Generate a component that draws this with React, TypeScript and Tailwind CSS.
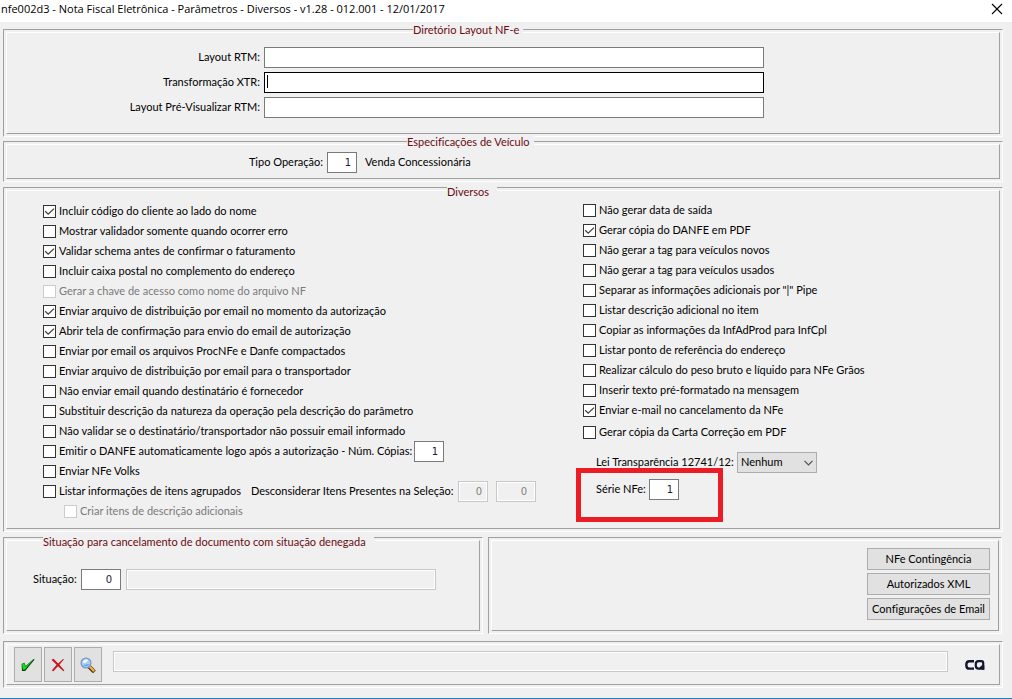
import { useState, type ReactNode } from "react";

const field = "h-[21px] border border-[#7a7a7a] bg-white outline-none";
const digits = "font-['DejaVu_Sans'] text-[10px] text-right text-[#1a1a3a]";
const disabledField =
  "h-[21px] border border-[#c8c8c8] bg-[#f0f0f0] shadow-[inset_0_0_0_1px_#fff] outline-none";

function Panel({
  className = "",
  title,
  titleClass = "",
  children,
}: {
  className?: string;
  title?: string;
  titleClass?: string;
  children: ReactNode;
}) {
  return (
    <fieldset
      className={`relative min-w-0 border border-t-[#a0a0a0] border-l-[#a0a0a0] border-r-white border-b-white p-[2px] ${className}`}
    >
      {title && (
        <legend
          className={`absolute bg-[#f0f0f0] leading-[14px] whitespace-nowrap text-[#6b0a12] ${titleClass}`}
        >
          {title}
        </legend>
      )}
      <div className="h-full border border-t-white border-l-white border-r-[#a0a0a0] border-b-[#a0a0a0]">
        {children}
      </div>
    </fieldset>
  );
}

type Option = { text: string; on?: boolean; off?: boolean };

function Check({ text, on = false, off = false }: Option) {
  const [checked, setChecked] = useState(on);
  return (
    <label
      className={`flex h-[19px] items-center gap-[3px] whitespace-nowrap ${off ? "text-[#7a7a7a]" : ""}`}
    >
      <span className="grid">
        <input
          type="checkbox"
          checked={checked}
          disabled={off}
          onChange={(e) => setChecked(e.target.checked)}
          className="col-start-1 row-start-1 size-[13px] appearance-none border border-[#333] bg-white disabled:border-[#ccc]"
        />
        {checked && (
          <svg viewBox="0 0 13 13" className="pointer-events-none col-start-1 row-start-1 size-[13px]">
            <path d="M2.2 6.3 5.2 9.2 11 3.6" fill="none" stroke="#404040" strokeWidth="1.3" />
          </svg>
        )}
      </span>
      {text}
    </label>
  );
}

const leftOptions: Option[] = [
  { text: "Incluir código do cliente ao lado do nome", on: true },
  { text: "Mostrar validador somente quando ocorrer erro" },
  { text: "Validar schema antes de confirmar o faturamento", on: true },
  { text: "Incluir caixa postal no complemento do endereço" },
  { text: "Gerar a chave de acesso como nome do arquivo NF", off: true },
  { text: "Enviar arquivo de distribuição por email no momento da autorização", on: true },
  { text: "Abrir tela de confirmação para envio do email de autorização", on: true },
  { text: "Enviar por email os arquivos ProcNFe e Danfe compactados" },
  { text: "Enviar arquivo de distribuição por email para o transportador" },
  { text: "Não enviar email quando destinatário é fornecedor" },
  { text: "Substituir descrição da natureza da operação pela descrição do parâmetro" },
  { text: "Não validar se o destinatário/transportador não possuir email informado" },
];

const rightOptions: Option[] = [
  { text: "Não gerar data de saída" },
  { text: "Gerar cópia do DANFE em PDF", on: true },
  { text: "Não gerar a tag para veículos novos" },
  { text: "Não gerar a tag para veículos usados" },
  { text: 'Separar as informações adicionais por "|" Pipe' },
  { text: "Listar descrição adicional no item" },
  { text: "Copiar as informações da InfAdProd para InfCpl" },
  { text: "Listar ponto de referência do endereço" },
  { text: "Realizar cálculo do peso bruto e líquido para NFe Grãos" },
  { text: "Inserir texto pré-formatado na mensagem" },
  { text: "Enviar e-mail no cancelamento da NFe", on: true },
];

const toolButton =
  "flex h-[35px] w-[28px] items-center justify-center border border-[#adadad] bg-[#e1e1e1] pr-px";
const pushButton = "h-[22px] w-[123px] border border-[#adadad] bg-[#e1e1e1] whitespace-nowrap";

export default function App() {
  return (
    <div className="flex min-h-screen flex-col border-b border-[#2a7fc0] bg-[#f0f0f0] font-[Lato,sans-serif] text-[11px] text-black [font-variant-ligatures:none]">
      <header className="flex h-[22px] items-start justify-between bg-white pr-[9px]">
        <h1 className="pl-px font-['Open_Sans',sans-serif] text-[11px] leading-[18px] whitespace-nowrap">
          nfe002d3 - Nota Fiscal Eletrônica - Parâmetros - Diversos - v1.28 - 012.001 - 12/01/2017
        </h1>
        <button aria-label="Fechar" className="mt-[3px]">
          <svg viewBox="0 0 12 12" className="size-[12px]">
            <path d="M1 1 11 11M11 1 1 11" stroke="#000" strokeWidth="1.1" />
          </svg>
        </button>
      </header>

      <main className="flex flex-col pt-[7px] pr-[9px] pl-[3px]">
        <Panel title="Diretório Layout NF-e" titleClass="-top-[7px] left-[409px] pr-1">
          <div className="grid grid-cols-[253px_minmax(0,500px)] items-center gap-1 pt-[14px] pb-[15px]">
            <label htmlFor="rtm" className="text-right">Layout RTM:</label>
            <input id="rtm" className={field} />
            <label htmlFor="xtr" className="text-right">Transformação XTR:</label>
            <div className="relative flex">
              <input
                id="xtr"
                className="h-[21px] w-full border border-black bg-white px-1 caret-transparent outline-none"
              />
              <span className="pointer-events-none absolute top-[3px] left-[3px] h-[13px] w-px bg-black" />
            </div>
            <label htmlFor="pre" className="text-right">Layout Pré-Visualizar RTM:</label>
            <input id="pre" className={field} />
          </div>
        </Panel>

        <Panel className="mt-1" title="Especificações de Veículo" titleClass="-top-[7px] left-[403px] pr-1">
          <div className="flex items-center pt-[7px] pb-[5px]">
            <label htmlFor="tipo" className="mr-1 w-[316px] text-right">Tipo Operação:</label>
            <input id="tipo" defaultValue="1" className={`${field} ${digits} w-[30px] pr-[5px]`} />
            <span className="ml-2">Venda Concessionária</span>
          </div>
        </Panel>

        <Panel className="mt-[5px]" title="Diversos" titleClass="-top-[3px] left-[443px] pr-2">
          <div className="grid grid-cols-[540px_minmax(0,1fr)] pb-[7px] pl-[36px]">
            <div className="flex flex-col gap-px pt-[11px]">
              {leftOptions.map((o) => (
                <Check key={o.text} {...o} />
              ))}
              <div className="flex h-[19px] items-center">
                <div className="w-[305px]">
                  <Check text="Emitir o DANFE automaticamente logo após a autorização -" />
                </div>
                <label htmlFor="copias" className="w-[66px] whitespace-nowrap">Núm. Cópias:</label>
                <input id="copias" defaultValue="1" className={`${field} ${digits} w-[30px] pr-[5px]`} />
              </div>
              <Check text="Enviar NFe Volks" />
              <div className="flex h-[19px] items-center">
                <div className="w-[208px]">
                  <Check text="Listar informações de itens agrupados" />
                </div>
                <label htmlFor="sel1" className="w-[207px] whitespace-nowrap">
                  Desconsiderar Itens Presentes na Seleção:
                </label>
                <input id="sel1" disabled defaultValue="0" className={`${disabledField} ${digits} w-[30px] pr-[5px] text-[#808080]`} />
                <input aria-label="Seleção final" disabled defaultValue="0" className={`${disabledField} ${digits} ml-2 w-[40px] pr-[8px] text-[#808080]`} />
              </div>
              <div className="pl-[21px]">
                <Check text="Criar itens de descrição adicionais" off />
              </div>
            </div>

            <div className="flex flex-col pt-[10px]">
              <div className="flex flex-col gap-px">
                {rightOptions.map((o) => (
                  <Check key={o.text} {...o} />
                ))}
              </div>
              <div className="mt-[3px]">
                <Check text="Gerar cópia da Carta Correção em PDF" />
              </div>
              <div className="mt-[10px] flex items-center pl-[13px]">
                <label htmlFor="lei" className="w-[141px] whitespace-nowrap">Lei Transparência 12741/12:</label>
                <div className="relative">
                  <select id="lei" className="block h-[21px] w-[80px] appearance-none border border-[#adadad] bg-[#e1e1e1] pl-[3px] outline-none">
                    <option>Nenhum</option>
                  </select>
                  <svg viewBox="0 0 9 6" className="pointer-events-none absolute top-[8px] right-[4px] h-[6px] w-[9px]">
                    <path d="M.5.8 4.5 4.8 8.5.8" fill="none" stroke="#505050" strokeWidth="1.2" />
                  </svg>
                </div>
              </div>
              <div className="relative mt-[6px] flex items-center pl-[13px]">
                <label htmlFor="serie" className="w-[53px] whitespace-nowrap">Série NFe:</label>
                <input id="serie" defaultValue="1" className={`${field} ${digits} w-[30px] pr-[5px]`} />
                <span className="pointer-events-none absolute -top-[11px] -left-[7px] h-[54px] w-[147px] border-[5px] border-[#eb1c24]" />
              </div>
            </div>
          </div>
        </Panel>

        <div className="mt-[5px] flex gap-[5px] pr-px">
          <Panel
            className="h-[97px] w-[480px]"
            title="Situação para cancelamento de documento com situação denegada"
            titleClass="-top-[3px] left-[39px] pr-2"
          >
            <div className="flex items-center pt-[28px] pl-[26px]">
              <label htmlFor="situacao" className="w-[48px] whitespace-nowrap">Situação:</label>
              <input id="situacao" defaultValue="0" className={`${field} ${digits} w-[40px] pr-[8px]`} />
              <input aria-label="Descrição da situação" disabled className={`${disabledField} ml-[5px] w-[310px]`} />
            </div>
          </Panel>
          <Panel className="h-[97px] flex-1">
            <div className="flex flex-col items-end gap-[3px] pt-[7px] pr-[8px]">
              <button className={pushButton}>NFe Contingência</button>
              <button className={pushButton}>Autorizados XML</button>
              <button className={pushButton}>Configurações de Email</button>
            </div>
          </Panel>
        </div>

        <Panel className="mt-[7px]">
          <div className="flex items-center gap-[2px] pt-[2px] pr-[14px] pb-[2px] pl-[7px]">
            <button aria-label="Confirmar" className={toolButton}>
              <svg viewBox="0 0 14 14" className="size-[14px]">
                <path d="M.6 6 3.4 4.8 4.6 8 12.6 1 13.6 1.6 4.2 13 1 13Z" fill="#063c06" />
                <path d="M1 6 3.3 5.2 4.3 8.8 12.8 1 3.8 11.8 1.8 11.8Z" fill="#16dc1e" />
              </svg>
            </button>
            <button aria-label="Cancelar" className={toolButton}>
              <svg viewBox="0 0 14 14" className="size-[14px]">
                <path d="M.5 1.8 2.6.8 7.2 5.4 12 1 13 1.3 8.4 6.8 13.4 12.5 12.4 13.2 7 8.3 2.4 13.2.8 12.5 5.6 6.8Z" fill="#c5141a" />
              </svg>
            </button>
            <button aria-label="Pesquisar" className={toolButton}>
              <svg viewBox="0 0 16 16" className="size-[16px]">
                <path d="M9 9.5 14.4 14.9" stroke="#4a3210" strokeWidth="4" />
                <path d="M9 9 14.2 14.2" stroke="#f0b040" strokeWidth="2.4" />
                <circle cx="6" cy="6" r="4.9" fill="#a5d0f6" stroke="#7f93bd" strokeWidth="1.2" />
                <path d="M2.6 5.5A3.6 3.6 0 0 1 8.5 3.3L5 6.2Z" fill="#f0f9ff" />
                <path d="M3 8A4 4 0 0 0 9.6 7Z" fill="#5fa8ec" />
              </svg>
            </button>
            <input aria-label="Mensagem" disabled className={`${disabledField} -mt-[7px] ml-[9px] min-w-0 flex-1`} />
            <svg viewBox="0 0 20 12" className="ml-[15px] h-[12px] w-[20px]" role="img" aria-label="CQ">
              <path d="M9 2.2H4.4A3 3 0 0 0 1.4 5V6.8A3 3 0 0 0 4.4 9.6H9" fill="none" stroke="#14142e" strokeWidth="2.4" />
              <path d="M15 9.6H13.6A2.8 2.8 0 0 1 10.8 6.8V5A2.8 2.8 0 0 1 13.6 2.2H16.4A1.8 1.8 0 0 1 18.2 4V10.8" fill="none" stroke="#14142e" strokeWidth="2.2" />
              <path d="M14.5 10.8V8.6L16.6 6.4H19.3V10.8Z" fill="#14142e" />
            </svg>
          </div>
        </Panel>
      </main>
    </div>
  );
}
